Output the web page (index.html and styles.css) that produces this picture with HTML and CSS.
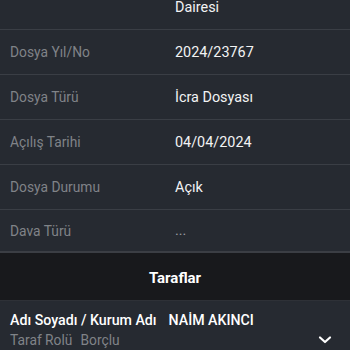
FILE: index.html
```html
<!DOCTYPE html>
<html lang="tr">
<head>
<meta charset="utf-8">
<link rel="stylesheet" href="styles.css">
</head>
<body>
<div class="screen">
  <div class="row row-first">
    <div class="label"></div>
    <div class="value">Dairesi</div>
  </div>
  <div class="row">
    <div class="label">Dosya Yıl/No</div>
    <div class="value">2024/23767</div>
  </div>
  <div class="row">
    <div class="label">Dosya Türü</div>
    <div class="value">İcra Dosyası</div>
  </div>
  <div class="row">
    <div class="label">Açılış Tarihi</div>
    <div class="value">04/04/2024</div>
  </div>
  <div class="row">
    <div class="label">Dosya Durumu</div>
    <div class="value">Açık</div>
  </div>
  <div class="row row-last">
    <div class="label">Dava Türü</div>
    <div class="value muted-value">...</div>
  </div>
  <div class="section-header">Taraflar</div>
  <div class="party">
    <div class="party-main">
      <span class="party-key">Adı Soyadı / Kurum Adı</span>
      <span class="party-name">NAİM AKINCI</span>
    </div>
    <div class="party-sub">
      <span class="party-role-key">Taraf Rolü</span>
      <span class="party-role">Borçlu</span>
      <svg class="chevron" width="14" height="10" viewBox="0 0 14 10"><path d="M2 2.5 L7 7 L12 2.5" fill="none" stroke="#ffffff" stroke-width="2.2" stroke-linecap="round" stroke-linejoin="round"/></svg>
    </div>
  </div>
</div>
</body>
</html>
```

FILE: styles.css
```css
html, body {
  margin: 0;
  padding: 0;
  background: #262a31;
}
.screen {
  width: 350px;
  height: 350px;
  overflow: hidden;
  font-family: Roboto, "Noto Sans", sans-serif;
  background: #262a31;
}
.row {
  display: flex;
  align-items: center;
  height: 44px;
  border-bottom: 1px solid #3a3e45;
  box-sizing: content-box;
}
.row-first {
  height: 29px;
  align-items: flex-start;
}
.row-first .value {
  line-height: 16px;
}
.row-last {
  height: 41px;
  border-bottom: 2px solid #3b3e44;
}
.label {
  width: 175px;
  padding-left: 10px;
  box-sizing: border-box;
  font-size: 13.8px;
  color: #808388;
}
.value {
  font-size: 14.4px;
  color: #f2f3f4;
}
.muted-value {
  color: #9a9da2;
}
.section-header {
  height: 45px;
  padding-top: 2px;
  background: #18191c;
  color: #ffffff;
  font-weight: 700;
  font-size: 15px;
  display: flex;
  align-items: center;
  justify-content: center;
  border-bottom: 1px solid #2e3137;
}
.party {
  padding: 9px 10px 0 10px;
}
.party-main {
  display: flex;
  gap: 12px;
  font-size: 14.2px;
  font-weight: 500;
  color: #ffffff;
  line-height: 20px;
}
.party-sub {
  display: flex;
  align-items: center;
  gap: 8px;
  font-size: 13.8px;
  color: #808388;
  line-height: 20px;
}
.chevron {
  margin-left: auto;
  margin-right: 8px;
}
```
